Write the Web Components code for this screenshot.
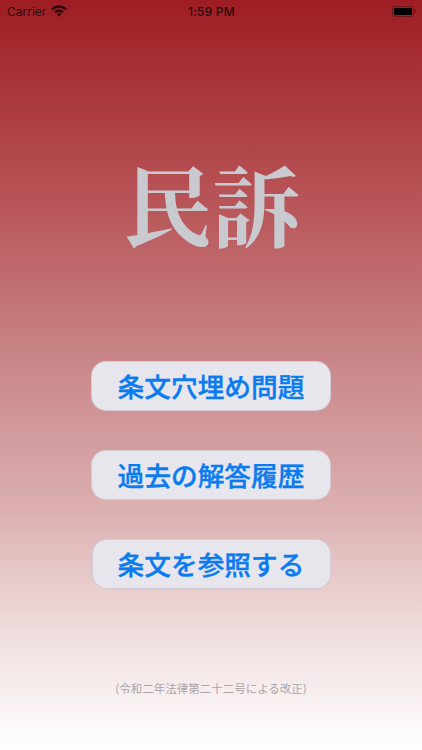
<!DOCTYPE html>
<html lang="ja">
<head>
<meta charset="utf-8">
<title>民訴</title>
<style>
  html, body { margin: 0; height: 100%; }
  body { font-family: "Noto Sans CJK JP", sans-serif; }
</style>
</head>
<body>
<home-screen>
  <status-bar slot="bar"></status-bar>
  <h1 slot="title">民訴</h1>
  <menu-button>条文穴埋め問題</menu-button>
  <menu-button>過去の解答履歴</menu-button>
  <menu-button narrow>条文を参照する</menu-button>
  <span slot="note">(令和二年法律第二十二号による改正)</span>
</home-screen>
<script>
class StatusBar extends HTMLElement {
    constructor() {
        super();
        this.attachShadow({ mode: 'open' });
        this.shadowRoot.innerHTML = `
            <style>
                :host {
                    display: grid;
                    grid-template-columns: 1fr auto 1fr;
                    align-items: center;
                    height: 20px;
                    padding: 1px 6px 0 7px;
                    color: #2a0a0c;
                    font-family: Inter, "Liberation Sans", sans-serif;
                    font-size: 12px;
                }
                .left { display: flex; align-items: center; gap: 5px; }
                .time { font-weight: 500; font-size: 12px; letter-spacing: .2px; }
                .right { display: flex; justify-content: flex-end; }
                svg { display: block; }
            </style>
            <div class="left">
                <span>Carrier</span>
                <svg width="16" height="12" viewBox="0 0 15 11">
                    <path fill="#2a0a0c" d="M7.500 0C4.700 0 2.100 1.100 0 3.100L1.700 4.900C3.300 3.300 5.300 2.500 7.500 2.500s4.200.8 5.800 2.400L15 3.100C12.900 1.100 10.300 0 7.500 0zM7.500 4c-1.700 0-3.300.6-4.600 1.800l1.700 1.800c.8-.7 1.800-1.100 2.900-1.100s2.100.4 2.900 1.100l1.700-1.800C10.800 4.600 9.200 4 7.500 4zM7.500 7.600c-.8 0-1.500.3-2.100.8l2.100 2.300 2.100-2.300c-.6-.5-1.300-.8-2.100-.8z"/>
                </svg>
            </div>
            <span class="time">1:59 PM</span>
            <div class="right">
                <svg width="24" height="11" viewBox="0 0 24 11">
                    <rect x="0.500" y="0.500" width="21" height="10" rx="2.500" fill="none" stroke="#2a0a0c" stroke-opacity=".4"/>
                    <rect x="2" y="2" width="18" height="7" rx="1.200" fill="#050102"/>
                    <rect x="22.500" y="3.800" width="1.200" height="3.400" rx=".6" fill="#2a0a0c" fill-opacity=".45"/>
                </svg>
            </div>
        `;
    }
}

class MenuButton extends HTMLElement {
    constructor() {
        super();
        this.attachShadow({ mode: 'open' });
        this.shadowRoot.innerHTML = `
            <style>
                :host {
                    display: block;
                    width: 240px;
                }
                :host([narrow]) { width: 239px; }
                button {
                    display: block;
                    box-sizing: border-box;
                    width: 100%;
                    height: 50px;
                    padding: 0;
                    background: #e6e6ec;
                    border: 1px solid rgba(205, 195, 205, .75);
                    border-radius: 15px;
                    color: #0b7bf0;
                    font-family: "Noto Sans CJK JP", sans-serif;
                    font-size: 26.700px;
                    font-weight: 500;
                    -webkit-text-stroke: .35px #0b7bf0;
                    line-height: 48px;
                    text-align: center;
                }
            </style>
            <button type="button"><slot></slot></button>
        `;
    }
}

class HomeScreen extends HTMLElement {
    constructor() {
        super();
        this.attachShadow({ mode: 'open' });
        this.shadowRoot.innerHTML = `
            <style>
                :host {
                    display: flex;
                    flex-direction: column;
                    box-sizing: border-box;
                    height: 750px;
                    background: linear-gradient(#9e1d24 0%, #b85558 27%, #c98688 48%, #dcb0b1 68%, #efdcdc 84%, #ffffff 100%);
                    overflow: hidden;
                }
                .title {
                    display: flex;
                    justify-content: center;
                    height: 340px;
                    padding: 125px 0 0 3px;
                    box-sizing: border-box;
                }
                ::slotted(h1) {
                    margin: 0;
                    color: #c9c9d0;
                    font-family: "Noto Serif CJK JP", "Noto Serif JP", "IPAMincho", "Noto Sans CJK JP", serif;
                    font-size: 88px;
                    font-weight: 700;
                    line-height: 112px;
                    letter-spacing: 1px;
                }
                .buttons {
                    display: flex;
                    flex-direction: column;
                    align-items: center;
                    gap: 39px;
                }
                .note {
                    display: flex;
                    justify-content: center;
                    margin-top: 90px;
                }
                ::slotted(span) {
                    color: #aaa5a9;
                    font-family: "Noto Sans CJK JP", sans-serif;
                    font-size: 11.500px;
                    line-height: 18px;
                }
            </style>
            <slot name="bar"></slot>
            <div class="title"><slot name="title"></slot></div>
            <div class="buttons"><slot></slot></div>
            <div class="note"><slot name="note"></slot></div>
        `;
    }
}

customElements.define('status-bar', StatusBar);
customElements.define('menu-button', MenuButton);
customElements.define('home-screen', HomeScreen);
</script>
</body>
</html>
